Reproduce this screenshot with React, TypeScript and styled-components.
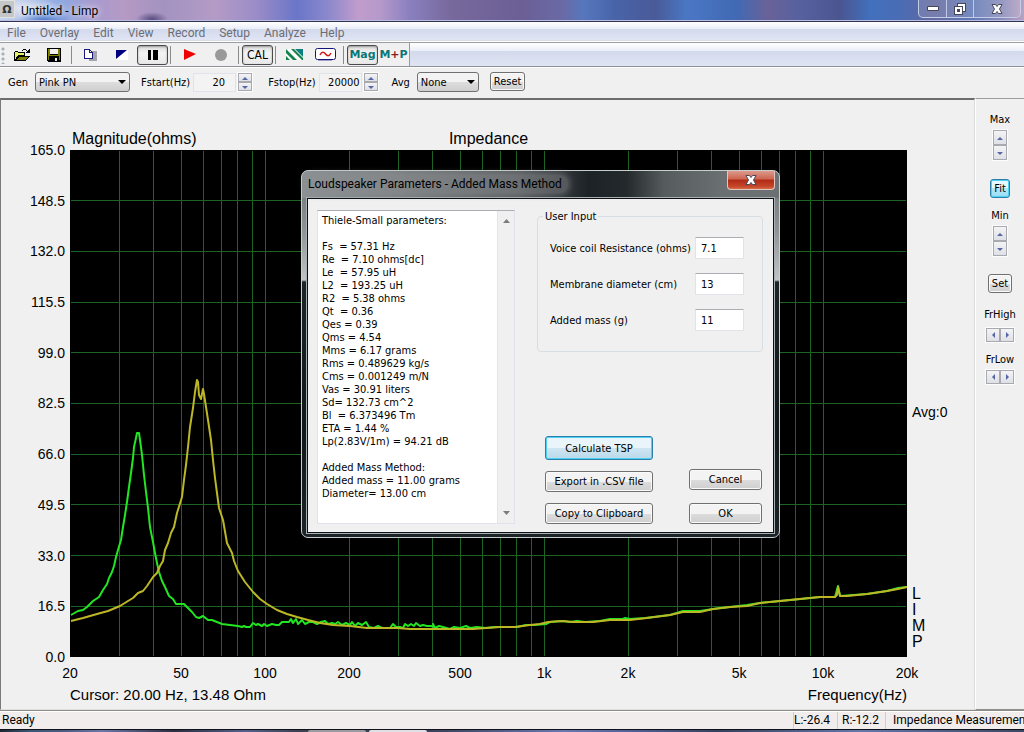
import React from "react";
import styled, { createGlobalStyle, css } from "styled-components";

const uiFont = `"DejaVu Sans Condensed", "Noto Sans", sans-serif`;
const shellFont = `Roboto, "Open Sans", sans-serif`;
const plotFont = `"Liberation Sans", Arial, sans-serif`;

const GlobalStyle = createGlobalStyle`
  * { box-sizing: border-box; }
  body { margin: 0; background: #f0f0f0; color: #000; font: 11px/13px ${uiFont}; overflow: hidden; }
  button, input, select, textarea { font: inherit; color: inherit; margin: 0; padding: 0; }
  svg { display: block; }
`;

/* ---------- shell ---------- */

const AppWindow = styled.div`
  position: relative;
  display: flex;
  flex-direction: column;
  min-height: 100vh;
  overflow: hidden;
`;

const TitleBar = styled.header`
  display: flex;
  align-items: flex-start;
  height: 22px;
  border-bottom: 1px solid #33334f;
  box-shadow: inset 0 -1px 0 #b9bfe6;
  background:
    radial-gradient(ellipse 26px 9px at 44px 20px, #4a78cc, transparent),
    radial-gradient(ellipse 16px 7px at 152px 19px, #5a4c80, transparent),
    radial-gradient(ellipse 40px 12px at 20px 8px, #dfe3f0, transparent),
    linear-gradient(90deg, #c9d2ea 0%, #a9bfe9 3%, #8ea8e0 6%, #a79bd0 9%, #b59ac4 12%, #a392c0 16%,
    #b49bc6 21%, #9b8cc8 25%, #6a76c8 29%, #8b88cc 32%, #c09ccc 35%, #b79aca 37%, #8a80c0 40%, #78699c 44%,
    #6b5f96 51%, #6a6aa6 55%, #5677bd 57%, #4864a8 60%, #4a5a98 64%, #4a77c4 67%, #4169b4 72%, #6a6298 75%,
    #56619f 78%, #4b5590 82%, #4270bd 85%, #4a6cb4 88%, #63689e 91%, #5f78b4 95%, #8b8cba 98%, #b9a2c2 100%);
`;

const AppBadge = styled.span`
  display: grid;
  place-items: end center;
  width: 15px;
  height: 18px;
  padding-bottom: 1px;
  background: #c4c6c8;
  border: 1px solid #e0e2e4;
  border-left: 0;
  font: 700 11px/13px "DejaVu Sans", sans-serif;
  color: #333;
`;

const TitleText = styled.h1`
  flex: 1;
  margin: 0;
  padding: 2px 6px;
  font: 400 12px/18px ${shellFont};
  text-shadow: 0 0 6px #fff, 0 0 8px #fff8;
`;

const CaptionButtons = styled.div`
  display: flex;
  height: 18px;
  margin-right: 3px;
  border: 1px solid #c3cbe8;
  border-top: 0;
  border-radius: 0 0 5px 5px;
  background: #ffffff22;
`;

const CaptionButton = styled.button<{ $wide?: boolean }>`
  display: grid;
  place-items: center;
  width: ${(p) => (p.$wide ? 47 : 27)}px;
  border: 0;
  background: none;
  & + & { border-left: 1px solid #c3cbe8; }
`;

const MenuBar = styled.nav`
  display: flex;
  gap: 14px;
  height: 21px;
  padding: 1px 7px 0;
  border-bottom: 1px solid #9a9ca4;
  background: linear-gradient(#ffffff, #e9edf6 35%, #d3daec 36%, #e0e4f4 88%, #b6bac8 89%, #fff 96%);
`;

const MenuItem = styled.button`
  border: 0;
  background: none;
  color: #6c6d75;
  font: 12px/18px ${shellFont};
`;

/* ---------- toolbar ---------- */

const ToolBar = styled.div`
  display: flex;
  height: 24px;
  border-bottom: 1px solid #8f9198;
  background: linear-gradient(#ffffff, #e9edf6 36%, #d3daec 37%, #e0e4f4);
`;

const ToolGroup = styled.div`
  display: flex;
  align-items: center;
  background: #f0f0f0;
  border-right: 1px solid #9a9a9a;
`;

const Grip = styled.span`
  width: 7px;
  height: 18px;
  background: radial-gradient(circle at 3px 3px, #a7aebb 1px, transparent 2px) 0 0 / 7px 5px;
`;

const Separator = styled.span`
  width: 6px;
  height: 18px;
  border-left: 2px solid transparent;
  background: linear-gradient(90deg, #8c8c8c 1px, transparent 1px) no-repeat;
  background-clip: padding-box;
`;

const ToolButton = styled.button<{ $pressed?: boolean }>`
  display: flex;
  align-items: center;
  justify-content: center;
  width: 31px;
  height: 20px;
  border: 1px solid ${(p) => (p.$pressed ? "#4b4b4b" : "transparent")};
  border-radius: 3px;
  background: ${(p) => (p.$pressed ? "linear-gradient(#dcdcdc, #f4f4f4 40%, #e8e8e8)" : "none")};
  ${(p) => p.$pressed && css`box-shadow: inset 0 1px 2px #9a9a9a;`}
`;

const CalText = styled.span`
  font: 12px/16px "DejaVu Sans Condensed", sans-serif;
`;

const ModeText = styled.span`
  font: 700 11px/14px "DejaVu Sans", sans-serif;
  color: #0b7676;
  em { font-style: normal; color: #8c1c1c; }
`;

/* ---------- controls ---------- */

const PushButton = styled.button<{ $active?: boolean; $tall?: boolean; $small?: boolean }>`
  height: ${(p) => (p.$small ? 19 : p.$tall ? 24 : 21)}px;
  padding: 0 ${(p) => (p.$small ? 3 : 4)}px;
  border: 1px solid ${(p) => (p.$active ? "#2c7fa8" : "#707070")};
  border-radius: 3px;
  background: ${(p) =>
    !p.$active
      ? "linear-gradient(#f3f3f3 50%, #dddddd 51%, #cfcfcf)"
      : p.$small
        ? "linear-gradient(#e6f7fd 45%, #b4e6f8 50%, #98dcf4)"
        : "linear-gradient(#eaf5fb 50%, #cfe6f2 51%, #b9d9ea)"};
  box-shadow: inset 0 0 0 1px ${(p) => (p.$active ? "#4fd0f5" : "#fafafa")};
  white-space: nowrap;
`;

const ParamBar = styled.div`
  display: flex;
  align-items: flex-start;
  height: 31px;
  padding: 4px 8px 0;
  border-top: 1px solid #fff;
  background: #f0f0f0;
`;

const ParamGroup = styled.div<{ $gap: number; $after: number }>`
  display: flex;
  align-items: center;
  gap: ${(p) => p.$gap}px;
  height: 20px;
  margin-right: ${(p) => p.$after}px;
`;

const SelectShell = styled.span<{ $width: number }>`
  display: grid;
  align-items: center;
  width: ${(p) => p.$width}px;
  height: 20px;
  & > * { grid-area: 1 / 1; }
  & > svg { justify-self: end; margin-right: 4px; pointer-events: none; }
`;

const Select = styled.select`
  appearance: none;
  width: 100%;
  height: 20px;
  padding: 0 3px;
  border: 1px solid #707070;
  border-radius: 3px;
  background: linear-gradient(#f3f3f3 50%, #dddddd 51%, #cfcfcf);
`;

const NumberBox = styled.span`
  display: flex;
  align-items: center;
  gap: 1px;
`;

const NumberInput = styled.input<{ $pad: number }>`
  width: 43px;
  height: 19px;
  padding: 0 ${(p) => p.$pad}px 0 0;
  border: 1px solid #e0e4ea;
  background: #f3f3f3;
  text-align: right;
`;

const SpinShell = styled.span<{ $row?: boolean }>`
  display: flex;
  flex-direction: ${(p) => (p.$row ? "row" : "column")};
  border: 1px solid #fdfdfd;
`;

const SpinButton = styled.button<{ $h: number }>`
  display: grid;
  place-items: center;
  width: 14px;
  height: ${(p) => p.$h}px;
  border: 1px solid #a9aab0;
  background: linear-gradient(#f4f4f6, #dfe0e6);
`;

function Spinner({ name, h = 9, row = false }: { name: string; h?: number; row?: boolean }) {
  const [a, b] = row
    ? ["M5 0V6L2 3Z", "M2 0V6L5 3Z"]
    : ["M0 5H6L3 2Z", "M0 2H6L3 5Z"];
  return (
    <SpinShell $row={row}>
      {[a, b].map((d, i) => (
        <SpinButton key={i} $h={h} aria-label={`${name} ${i ? "down" : "up"}`}>
          <svg width="6" height="6"><path d={d} fill="#5566a4" /></svg>
        </SpinButton>
      ))}
    </SpinShell>
  );
}

function DropDown({ id, width, value }: { id: string; width: number; value: string }) {
  return (
    <SelectShell $width={width}>
      <Select id={id} defaultValue={value}><option>{value}</option></Select>
      <svg width="8" height="4"><path d="M0 0H8L4 4Z" fill="#000" /></svg>
    </SelectShell>
  );
}

/* ---------- main area ---------- */

const Workspace = styled.main`
  flex: 1;
  display: flex;
  min-height: 0;
`;

const PlotPane = styled.section`
  flex: 1;
  display: grid;
  grid-template-columns: 69px 1fr 67px;
  grid-template-rows: 50px 1fr 28px 24px;
  border-top: 2px solid #6d6d6d;
  border-left: 1px solid #7b7b7b;
  border-right: 1px solid #dcdcdc;
  border-bottom: 1px solid #e0e0e0;
  background: #f0f0f0;
  font: 14px/16px ${plotFont};
`;

const PlotHeading = styled.div`
  grid-column: 2;
  display: grid;
  grid-template-columns: 1fr auto 1fr;
  align-items: end;
  padding: 0 2px 2px;
  font-size: 16px;
  line-height: 18px;
`;

const YAxis = styled.div`
  grid-column: 1;
  grid-row: 2;
  display: flex;
  flex-direction: column;
  justify-content: space-between;
  padding-right: 5px;
`;

const YTick = styled.span`
  display: flex;
  align-items: center;
  justify-content: flex-end;
  height: 0;
`;

const PlotSvg = styled.svg`
  grid-column: 2;
  grid-row: 2;
  width: 100%;
  height: 100%;
  min-height: 0;
  background: #000;
`;

const XAxis = styled.div`
  grid-column: 2;
  grid-row: 3;
  display: grid;
  grid-template-columns: 398fr 301fr 301fr 398fr 301fr 301fr 398fr 301fr 301fr 0;
  padding-top: 8px;
`;

const XTick = styled.span`
  display: flex;
  justify-content: center;
  width: 0;
`;

const PlotFooter = styled.div`
  grid-column: 2;
  grid-row: 4;
  display: flex;
  justify-content: space-between;
  font-size: 15px;
  line-height: 20px;
`;

const PlotSide = styled.div`
  grid-column: 3;
  grid-row: 2;
  display: grid;
  grid-template-rows: 1fr 1fr;
  padding-left: 5px;
`;

const SideNotes = styled.div`
  grid-row: 2;
  display: flex;
  flex-direction: column;
  justify-content: space-between;
  padding-bottom: 7px;
`;

const Brand = styled.div`
  display: flex;
  flex-direction: column;
  font-size: 16px;
  line-height: 16px;
`;

const SidePanel = styled.aside`
  display: flex;
  flex-direction: column;
  align-items: center;
  width: 49px;
  padding-top: 14px;
  border-top: 1px solid #9d9d9d;
  border-left: 1px solid #fff;
  border-bottom: 1px solid #8f8f8f;
`;

const SideGroup = styled.div<{ $gap: number; $after: number }>`
  display: flex;
  flex-direction: column;
  align-items: center;
  gap: ${(p) => p.$gap}px;
  margin-bottom: ${(p) => p.$after}px;
`;

const StatusBar = styled.footer`
  display: flex;
  align-items: center;
  height: 19px;
  border-top: 1px solid #8d8d88;
  box-shadow: inset 0 1px 0 #fff;
  background: #f1edec;
  font: 12px/17px ${shellFont};
`;

const StatusCell = styled.span<{ $width?: number; $pad: number }>`
  ${(p) => (p.$width ? css`width: ${p.$width}px;` : css`flex: 1;`)}
  padding-left: ${(p) => p.$pad}px;
  white-space: nowrap;
  overflow: hidden;
  & + & { border-left: 1px solid #d0cecc; }
  &:nth-child(2) { border-left-color: transparent; }
`;

const TaskStrip = styled.div`
  display: flex;
  height: 4px;
  padding-left: 308px;
  gap: 3px;
  border-top: 1px solid #10131c;
  background: linear-gradient(90deg, #20262f, #3a5878 3%, #4a5a80 6%, #6d77a8 10%, #2b2f40 17%, #55608c 24%, #3c4150 29%,
    #39405a 42%, #6a78b0 55%, #4f5f94 62%, #37405c 70%, #6478ac 84%, #3d4763 100%);
`;

const TaskTab = styled.span<{ $light?: boolean }>`
  width: 58px;
  border-radius: 2px 2px 0 0;
  background: ${(p) => (p.$light ? "#dfe0e4" : "#9a9ca2")};
`;

/* ---------- plot ---------- */

const yTicks = ["165.0", "148.5", "132.0", "115.5", "99.0", "82.5", "66.0", "49.5", "33.0", "16.5", "0.0"];
const xTicks = ["20", "50", "100", "200", "500", "1k", "2k", "5k", "10k", "20k"];
const PLOT_W = 837;
const PLOT_H = 507;

const gridFreqs = [1, 2, 3, 4].flatMap((decade) =>
  [1, 2, 3, 4, 5, 6, 7, 8, 9].map((n) => n * 10 ** decade)
).filter((f) => f > 20 && f < 20000);

const freqToX = (f: number) => (Math.log10(f / 20) / 3) * PLOT_W;

const greenTrace =
  "1,465 8,461 13,460 17,457 23,451 29,447 33,440 37,434 39,428 42,422 44,416 46,407 48,400 51,390 53,377 55,365 57,352 59,337 61,323 63,308 64,297 66,288 67,283 69,283 70,290 72,305 74,325 76,342 78,358 80,377 83,392 85,403 87,413 89,422 92,431 95,437 99,446 103,449 106,454 114,454 117,457 122,462 126,467 129,468 133,466 138,470 142,470 147,472 152,474 160,475 168,476 172,477 174,476 176,477 180,477 183,473 186,475 188,474 192,476 194,474 197,476 202,474 206,475 209,475 212,472 219,472 221,469 223,473 226,469 228,474 232,470 235,474 239,472 243,472 247,474 251,472 255,471 258,474 262,473 265,474 268,472 272,475 276,473 280,475 282,472 285,476 288,473 292,475 296,472 299,477 304,478 308,476 312,478 320,478 323,474 326,477 330,477 333,478 335,474 338,476 341,474 344,476 346,473 350,476 353,475 357,476 361,476 364,477 363,474 365,478 369,476 373,477 380,479 384,477 390,478 396,476 400,478 407,477 415,478 425,477 440,477 447,477 456,475 464,475 476,474 480,472 493,471 500,472 507,471 515,472 530,471 540,469 553,469 555,468 560,469 575,468 600,465 613,461 630,461 643,459 660,457 677,455 690,453 710,451 730,449 750,447 765,447 768,436 770,446 797,444 817,441 828,438 837,437";
const yellowTrace =
  "1,471 13,468 27,464 38,461 50,456 58,451 63,448 68,443 73,441 77,436 83,427 87,423 90,416 93,411 95,400 98,393 101,383 104,377 107,363 112,347 114,330 116,315 118,297 120,277 123,258 125,242 127,230 128,232 129,245 131,249 133,239 134,244 136,257 138,270 141,290 143,310 145,328 147,343 149,358 153,370 157,393 162,403 164,411 168,421 175,432 183,442 190,449 197,454 207,460 217,464 227,467 238,470 250,473 263,475 280,476 297,478 327,478 340,479 377,479 403,479 430,477 445,477 460,475 470,474 478,472 492,471 503,472 523,472 540,470 560,470 577,468 600,465 613,462 630,462 643,459 660,457 677,456 690,453 710,451 730,449 750,447 765,447 767,445 768,437 770,446 777,446 797,444 817,441 828,439 837,437";

function ImpedancePlot() {
  return (
    <PlotPane>
      <PlotHeading>
        <span>Magnitude(ohms)</span>
        <span>Impedance</span>
      </PlotHeading>
      <YAxis>{yTicks.map((t) => <YTick key={t}>{t}</YTick>)}</YAxis>
      <PlotSvg viewBox={`0 0 ${PLOT_W} ${PLOT_H}`} preserveAspectRatio="none" role="img" aria-label="Impedance">
        <g stroke="#1b6423" shapeRendering="crispEdges">
          {gridFreqs.map((f) => (
            <line key={f} x1={freqToX(f)} x2={freqToX(f)} y1="1" y2={PLOT_H - 1} vectorEffect="non-scaling-stroke" />
          ))}
          {yTicks.slice(1, -1).map((t, i) => {
            const y = ((i + 1) * PLOT_H) / 10;
            return <line key={t} x1="1" x2={PLOT_W - 1} y1={y} y2={y} vectorEffect="non-scaling-stroke" />;
          })}
        </g>
        <g fill="none" strokeWidth="2" strokeLinejoin="round">
          <polyline points={greenTrace} stroke="#22e622" vectorEffect="non-scaling-stroke" />
          <polyline points={yellowTrace} stroke="#bdb726" vectorEffect="non-scaling-stroke" />
        </g>
      </PlotSvg>
      <PlotSide>
        <SideNotes>
          <span>Avg:0</span>
          <Brand>{["L", "I", "M", "P"].map((c) => <span key={c}>{c}</span>)}</Brand>
        </SideNotes>
      </PlotSide>
      <XAxis>{xTicks.map((t) => <XTick key={t}>{t}</XTick>)}</XAxis>
      <PlotFooter>
        <span>Cursor: 20.00 Hz, 13.48 Ohm</span>
        <span>Frequency(Hz)</span>
      </PlotFooter>
    </PlotPane>
  );
}

/* ---------- dialog ---------- */

const DialogFrame = styled.section`
  position: absolute;
  left: 301px;
  top: 170px;
  width: 479px;
  padding: 0 4px 3px;
  border: 1px solid #c8cdd0;
  border-radius: 7px;
  background:
    linear-gradient(90deg, #8c9194 0%, #7d8183 20%, #5a5e60 45%, #1d2226 60%, #24292c 68%, #565b5d 76%, #6a6f71 88%, #6b7072 100%) top / 100% 27px no-repeat,
    linear-gradient(#6c7173, #8e9395 60px, #c0c4c6 109px, #1c2428 111px, #10171b 70%, #1c2428);
`;

const DialogBar = styled.header`
  display: flex;
  justify-content: space-between;
  align-items: flex-start;
  height: 26px;
`;

const DialogTitle = styled.h2`
  margin: 4px 0 0;
  padding: 0 6px 0 2px;
  border-radius: 8px;
  background: #8b8f9166;
  box-shadow: 0 0 6px 2px #8b8f9177;
  font: 400 12px/18px ${shellFont};
`;

const CloseButton = styled.button`
  display: grid;
  place-items: center;
  width: 48px;
  height: 19px;
  border: 1px solid #e3c4bf;
  border-top: 0;
  border-radius: 0 0 4px 4px;
  background: linear-gradient(#dd9a8c, #cc6450 45%, #b02a14 50%, #c4452a 85%, #d86a48);
`;

const DialogBody = styled.div`
  display: flex;
  gap: 22px;
  padding: 11px 10px 8px 9px;
  outline: 1px solid #0c1013;
  box-shadow: 0 0 0 2px #a9b0b3;
  margin: 2px;
  background: #f0f0f0;
`;

const ReportBox = styled.div`
  display: flex;
  width: 198px;
  height: 314px;
  border: 1px solid #e2e3ea;
  border-top-color: #abadb3;
  background: #fff;
`;

const ReportText = styled.textarea`
  flex: 1;
  min-width: 0;
  padding: 3px 0 0 4px;
  border: 0;
  outline: 0;
  resize: none;
  overflow: hidden;
  background: none;
  white-space: pre;
`;

const ScrollTrack = styled.div`
  display: flex;
  flex-direction: column;
  justify-content: space-between;
  align-items: center;
  width: 17px;
  padding: 8px 0;
  background: #f0f0f0;
  border-left: 1px solid #e4e4e4;
`;

const InputColumn = styled.div`
  flex: 1;
  display: flex;
  flex-direction: column;
  justify-content: space-between;
`;

const UserFields = styled.fieldset`
  display: grid;
  grid-template-columns: 1fr 49px;
  grid-auto-rows: 22px;
  align-items: center;
  row-gap: 14px;
  margin: 0;
  padding: 14px 18px 20px 12px;
  border: 1px solid #d5dfe5;
  border-radius: 4px;
  legend { margin-left: -7px; padding: 0 2px; }
`;

const TextField = styled.input`
  width: 49px;
  height: 22px;
  padding: 0 5px;
  border: 1px solid #e2e3ea;
  border-top-color: #abadb3;
  border-radius: 1px;
  background: #fff;
`;

const DialogButtons = styled.div`
  display: flex;
  justify-content: space-between;
  align-items: flex-end;
  padding: 0 1px 0 8px;
`;

const ButtonStack = styled.div<{ $width: number; $gap: number }>`
  display: flex;
  flex-direction: column;
  gap: ${(p) => p.$gap}px;
  width: ${(p) => p.$width}px;
`;

const report = `Thiele-Small parameters:

Fs  = 57.31 Hz
Re  = 7.10 ohms[dc]
Le  = 57.95 uH
L2  = 193.25 uH
R2  = 5.38 ohms
Qt  = 0.36
Qes = 0.39
Qms = 4.54
Mms = 6.17 grams
Rms = 0.489629 kg/s
Cms = 0.001249 m/N
Vas = 30.91 liters
Sd= 132.73 cm^2
Bl  = 6.373496 Tm
ETA = 1.44 %
Lp(2.83V/1m) = 94.21 dB

Added Mass Method:
Added mass = 11.00 grams
Diameter= 13.00 cm`;

const fields = [
  { id: "coil", label: "Voice coil Resistance (ohms)", value: "7.1" },
  { id: "diameter", label: "Membrane diameter (cm)", value: "13" },
  { id: "mass", label: "Added mass (g)", value: "11" },
];

function CloseGlyph() {
  return (
    <svg width="12" height="10" viewBox="0 0 12 10">
      <path d="M1 0.500H4.500L6 2.500L7.500 0.500H11L8.500 5L11 9.500H7.500L6 7.500L4.500 9.500H1L3.500 5Z" fill="#fff" stroke="#46485a" />
    </svg>
  );
}

function ParametersDialog() {
  return (
    <DialogFrame role="dialog" aria-labelledby="dialog-title">
      <DialogBar>
        <DialogTitle id="dialog-title">Loudspeaker Parameters - Added Mass Method</DialogTitle>
        <CloseButton aria-label="Close dialog"><CloseGlyph /></CloseButton>
      </DialogBar>
      <DialogBody>
        <ReportBox>
          <ReportText readOnly aria-label="Thiele-Small parameters" defaultValue={report} />
          <ScrollTrack>
            <svg width="7" height="4"><path d="M0 4H7L3.500 0Z" fill="#7c7c7c" /></svg>
            <svg width="7" height="4"><path d="M0 0H7L3.500 4Z" fill="#7c7c7c" /></svg>
          </ScrollTrack>
        </ReportBox>
        <InputColumn>
          <UserFields>
            <legend>User Input</legend>
            {fields.map((f) => (
              <React.Fragment key={f.id}>
                <label htmlFor={f.id}>{f.label}</label>
                <TextField id={f.id} defaultValue={f.value} />
              </React.Fragment>
            ))}
          </UserFields>
          <DialogButtons>
            <ButtonStack $width={108} $gap={11}>
              <PushButton $active $tall>Calculate TSP</PushButton>
              <PushButton>Export in .CSV file</PushButton>
              <PushButton>Copy to Clipboard</PushButton>
            </ButtonStack>
            <ButtonStack $width={73} $gap={13}>
              <PushButton>Cancel</PushButton>
              <PushButton>OK</PushButton>
            </ButtonStack>
          </DialogButtons>
        </InputColumn>
      </DialogBody>
    </DialogFrame>
  );
}

/* ---------- toolbar icons ---------- */

const OpenIcon = () => (
  <svg width="17" height="14" viewBox="0 0 17 14" shapeRendering="crispEdges">
    <path d="M0 4H1V3H4V4H11V8H4V9H3V11H2V13H0Z" fill="#000" />
    <path d="M1 4H4V5H10V7H4V8H3V9H2V11H1Z" fill="#e6f26a" />
    <path d="M4 8H16V9H15V10H14V11H13V12H12V13H1V12H2V11H3V9H4Z" fill="#000" />
    <path d="M5 9H14V10H13V11H12V12H3V11H4V10H5Z" fill="#808000" />
    <path d="M8 2H9V1H12V2H13V3H14V2H15V1H16V5H12V4H13V3H12V2H9V3H8Z" fill="#000" />
  </svg>
);
const SaveIcon = () => (
  <svg width="14" height="14" shapeRendering="crispEdges">
    <path d="M0 0H14V14H1L0 13Z" fill="#000" />
    <path d="M1 1H3V7H11V1H13V12H12V8H2V12H1Z" fill="#808000" />
    <path d="M3 1H11V6H3Z" fill="#f0f0f0" />
    <path d="M8 10H10V13H8Z" fill="#f0f0f0" />
  </svg>
);
const CopyIcon = () => (
  <svg width="13" height="12" shapeRendering="crispEdges">
    <path d="M5 2H13V12H5Z" fill="#a3a3ac" />
    <path d="M0 0H6V1H7V2H8V3H9V10H0Z" fill="#1a1a7c" />
    <path d="M1 1H5V4H8V9H1ZM6 2H7V3H6Z" fill="#fff" />
  </svg>
);
const InvertIcon = () => (
  <svg width="12" height="10"><path d="M0 0H12V10H0Z" fill="#fff" /><path d="M0 0H11L0 9Z" fill="#000080" /></svg>
);
const PauseIcon = () => (
  <svg width="11" height="10" shapeRendering="crispEdges"><path d="M1 0H4V10H1ZM6 0H11V10H6Z" fill="#000" /></svg>
);
const PlayIcon = () => <svg width="12" height="11"><path d="M0 0L12 5L0 11Z" fill="#f00000" /></svg>;
const StopIcon = () => <svg width="12" height="12"><circle cx="6" cy="6" r="6" fill="#999" /></svg>;
const BandsIcon = () => (
  <svg width="17" height="11">
    <path d="M0 0H17V11H0Z" fill="#fff" />
    <path d="M0 0L11 11H7L0 4ZM5 0H8L17 9V11H16Z" fill="#12824a" />
    <path d="M0 7L4 11H0Z" fill="#12824a" />
    <path d="M9 0H17V8Z" fill="#0f8080" />
  </svg>
);
const WaveIcon = () => (
  <svg width="21" height="13">
    <rect x="0.500" y="0.500" width="20" height="11" rx="2" fill="#fff" stroke="#14147a" />
    <path d="M3 12.500H17" stroke="#a0a0c8" />
    <path d="M5 7C7 3 9 4 10.500 6S14 9 16 5" fill="none" stroke="#d01818" strokeWidth="1.500" />
  </svg>
);

const menus = ["File", "Overlay", "Edit", "View", "Record", "Setup", "Analyze", "Help"];

export default function App() {
  return (
    <AppWindow>
      <GlobalStyle />
      <TitleBar>
        <AppBadge aria-hidden>Ω</AppBadge>
        <TitleText>Untitled - Limp</TitleText>
        <CaptionButtons>
          <CaptionButton aria-label="Minimize">
            <svg width="12" height="5"><path d="M0.500 0.500H11.500V4.500H0.500Z" fill="#fff" stroke="#46485a" /></svg>
          </CaptionButton>
          <CaptionButton aria-label="Restore">
            <svg width="12" height="12" shapeRendering="crispEdges">
              <path d="M3 0H12V9H3Z" fill="#46485a" /><path d="M4 1H11V8H4Z" fill="#fff" />
              <path d="M0 3H9V12H0Z" fill="#46485a" /><path d="M1 4H8V11H1Z" fill="#fff" />
              <path d="M3 6H6V9H3Z" fill="#46485a" />
            </svg>
          </CaptionButton>
          <CaptionButton $wide aria-label="Close"><CloseGlyph /></CaptionButton>
        </CaptionButtons>
      </TitleBar>

      <MenuBar>{menus.map((m) => <MenuItem key={m}>{m}</MenuItem>)}</MenuBar>

      <ToolBar role="toolbar">
        <ToolGroup>
          <Grip />
          <ToolButton aria-label="Open"><OpenIcon /></ToolButton>
          <ToolButton aria-label="Save"><SaveIcon /></ToolButton>
          <Separator />
          <ToolButton aria-label="Copy"><CopyIcon /></ToolButton>
          <ToolButton aria-label="Invert background"><InvertIcon /></ToolButton>
          <ToolButton $pressed aria-label="Pause"><PauseIcon /></ToolButton>
          <Separator />
          <ToolButton aria-label="Start"><PlayIcon /></ToolButton>
          <ToolButton aria-label="Stop"><StopIcon /></ToolButton>
          <Separator />
          <ToolButton $pressed><CalText>CAL</CalText></ToolButton>
          <Separator />
          <ToolButton aria-label="Bands"><BandsIcon /></ToolButton>
          <ToolButton aria-label="Generator"><WaveIcon /></ToolButton>
          <Separator />
          <ToolButton $pressed><ModeText>Mag</ModeText></ToolButton>
          <ToolButton><ModeText>M<em>+</em>P</ModeText></ToolButton>
        </ToolGroup>
      </ToolBar>

      <ParamBar>
        <ParamGroup $gap={7} $after={11}>
          <label htmlFor="gen">Gen</label>
          <DropDown id="gen" width={95} value="Pink PN" />
        </ParamGroup>
        <ParamGroup $gap={3} $after={15}>
          <label htmlFor="fstart">Fstart(Hz)</label>
          <NumberBox>
            <NumberInput id="fstart" $pad={10} defaultValue="20" />
            <Spinner name="Fstart" />
          </NumberBox>
        </ParamGroup>
        <ParamGroup $gap={3} $after={13}>
          <label htmlFor="fstop">Fstop(Hz)</label>
          <NumberBox>
            <NumberInput id="fstop" $pad={1} defaultValue="20000" />
            <Spinner name="Fstop" />
          </NumberBox>
        </ParamGroup>
        <ParamGroup $gap={7} $after={11}>
          <label htmlFor="avg">Avg</label>
          <DropDown id="avg" width={62} value="None" />
        </ParamGroup>
        <PushButton $small>Reset</PushButton>
      </ParamBar>

      <Workspace>
        <ImpedancePlot />
        <SidePanel>
          <SideGroup $gap={3} $after={18}><span>Max</span><Spinner name="Max" h={15} /></SideGroup>
          <SideGroup $gap={0} $after={11}><PushButton $small $active>Fit</PushButton></SideGroup>
          <SideGroup $gap={3} $after={17}><span>Min</span><Spinner name="Min" h={15} /></SideGroup>
          <SideGroup $gap={0} $after={15}><PushButton $small>Set</PushButton></SideGroup>
          <SideGroup $gap={6} $after={10}><span>FrHigh</span><Spinner name="FrHigh" h={14} row /></SideGroup>
          <SideGroup $gap={3} $after={0}><span>FrLow</span><Spinner name="FrLow" h={14} row /></SideGroup>
        </SidePanel>
      </Workspace>

      <StatusBar>
        <StatusCell $pad={2}>Ready</StatusCell>
        <StatusCell $width={44} $pad={0}>L:-26.4</StatusCell>
        <StatusCell $width={48} $pad={4}>R:-12.2</StatusCell>
        <StatusCell $width={139} $pad={7}>Impedance Measuremen</StatusCell>
      </StatusBar>
      <TaskStrip><TaskTab /><TaskTab $light /></TaskStrip>

      <ParametersDialog />
    </AppWindow>
  );
}
